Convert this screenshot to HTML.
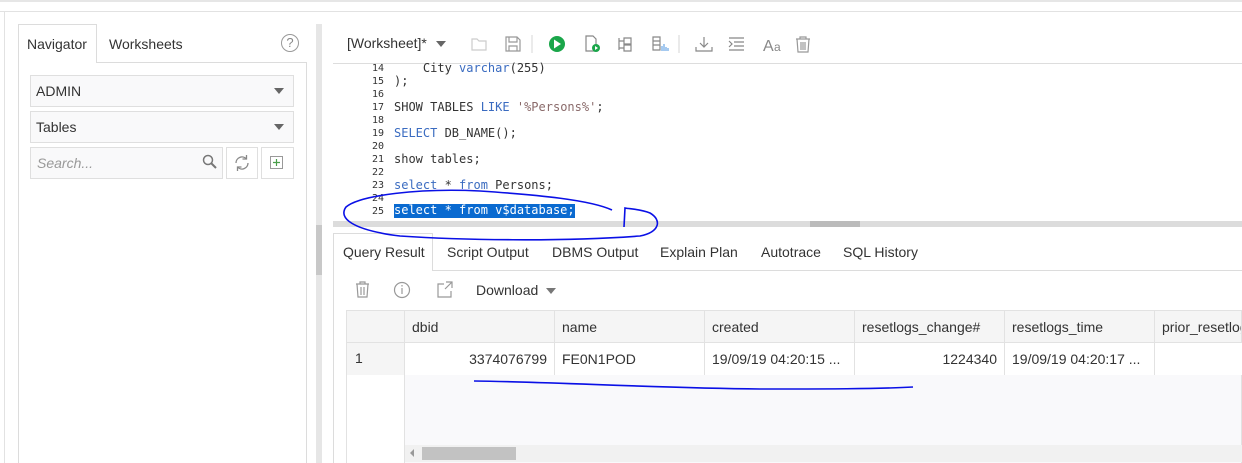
<!DOCTYPE html>
<html><head><meta charset="utf-8"><style>
*{margin:0;padding:0;box-sizing:border-box}
html,body{width:1242px;height:463px;overflow:hidden}
body{background:#fff;font-family:"Liberation Sans",sans-serif;font-size:14px;color:#333;position:relative}
.a{position:absolute}
.sel{border:1px solid #dfdfdf;background:#f9f9fa}
.caret{width:0;height:0;border-left:5px solid transparent;border-right:5px solid transparent;border-top:6px solid #666}
.code{font-family:"DejaVu Sans Mono","Liberation Mono",monospace;font-size:12px;line-height:13px;white-space:pre}
.ln{position:absolute;left:340px;width:44px;text-align:right;color:#333;font-size:10px}
.k{color:#3a6bc0}
.s{color:#8a6a6a}
.cell{position:absolute;height:32px;line-height:32px;font-size:14px;padding:0 7px;border-right:1px solid #e2e2e2;white-space:nowrap;overflow:hidden}
</style></head><body>
<div class="a" style="left:0;top:0;width:1242px;height:2px;background:#e6e6e6"></div>
<div class="a" style="left:0;top:11px;width:1242px;height:1px;background:#e2e2e2"></div>
<div class="a" style="left:4px;top:12px;width:1px;height:451px;background:#e2e2e2"></div>

<div class="a" style="left:18px;top:24px;width:79px;height:39px;border:1px solid #dcdcdc;border-bottom:none;background:#fff;z-index:2"></div>
<div class="a" style="left:18px;top:62px;width:289px;height:401px;border:1px solid #dcdcdc;border-bottom:none"></div>
<div class="a" style="left:27px;top:36px;z-index:3">Navigator</div>
<div class="a" style="left:109px;top:36px">Worksheets</div>
<div class="a" style="left:281px;top:34px;width:18px;height:18px;border:1px solid #999;border-radius:50%;text-align:center;font-size:13px;line-height:16px;color:#888">?</div>
<div class="a sel" style="left:30px;top:75px;width:264px;height:32px"></div>
<div class="a" style="left:36px;top:83px">ADMIN</div>
<div class="a caret" style="left:274px;top:88px"></div>
<div class="a sel" style="left:30px;top:111px;width:264px;height:32px"></div>
<div class="a" style="left:36px;top:119px">Tables</div>
<div class="a caret" style="left:274px;top:124px"></div>
<div class="a sel" style="left:30px;top:147px;width:193px;height:32px"></div>
<div class="a" style="left:37px;top:155px;color:#999;font-style:italic">Search...</div>
<svg class="a" style="left:202px;top:154px" width="16" height="16"><circle cx="6" cy="6" r="4.5" fill="none" stroke="#777" stroke-width="1.5"/><path d="M9 9l5 5" stroke="#777" stroke-width="2"/></svg>
<div class="a sel" style="left:226px;top:147px;width:32px;height:32px;background:#fff"></div>
<svg class="a" style="left:233px;top:154px" width="18" height="18"><path d="M3 9a6 6 0 0 1 10.5-4M15 9a6 6 0 0 1-10.5 4" fill="none" stroke="#888" stroke-width="1.3"/><path d="M13.5 1v4h-4M4.5 17v-4h4" fill="none" stroke="#888" stroke-width="1.3"/></svg>
<div class="a sel" style="left:261px;top:147px;width:33px;height:32px;background:#fff"></div>
<svg class="a" style="left:270px;top:156px" width="14" height="14"><rect x="0.5" y="0.5" width="12" height="12" fill="none" stroke="#999"/><path d="M6.5 3v7M3 6.5h7" stroke="#4a9e4a" stroke-width="1.2"/></svg>

<div class="a" style="left:316px;top:24px;width:6px;height:439px;background:#e6e6e6"></div>
<div class="a" style="left:316px;top:225px;width:6px;height:50px;background:#c8c8c8"></div>

<div class="a" style="left:347px;top:35px">[Worksheet]*</div>
<div class="a caret" style="left:436px;top:41px"></div>
<svg class="a" style="left:470px;top:35px" width="360" height="18" fill="none" stroke-width="1.2">
<path d="M2 4h5l2 2h7v9H2z" stroke="#ccc"/>
<path d="M36 2h11l3 3v11H36z M39 2v5h8V2 M39 16v-5h8v5" stroke="#999"/>
<line x1="62" y1="-6" x2="62" y2="20" stroke="#ddd"/>
<circle cx="87" cy="9" r="8" fill="#1aa64a" stroke="none"/><path d="M84 4.5v9l7-4.5z" fill="#fff" stroke="none"/>
<path d="M116 1h7l3 3v12h-10z" stroke="#888"/><circle cx="126" cy="13" r="4" fill="#1aa64a" stroke="none"/><path d="M125 11v4l3-2z" fill="#fff" stroke="none"/>
<path d="M149 3v12M149 6h5M149 13h5 M154 3h7v6h-7z M154 10h7v6h-7z" stroke="#888"/>
<path d="M183 2h7v13h-7z M183 6h7M183 10h7" stroke="#888"/><path d="M192 11v5M194 9v7M196 12v4M198 13v3" stroke="#6aa6e6"/>
<line x1="209" y1="-6" x2="209" y2="20" stroke="#ddd"/>
<path d="M234 2v10M230 8l4 4 4-4M226 12v4h16v-4" stroke="#888"/>
<path d="M259 3h15M264 7h10M264 11h10M259 15h15M259 6l3 3-3 3" stroke="#888"/>
<text x="293" y="16" font-family="Liberation Sans" font-size="16" fill="#888" stroke="none">A</text><text x="304" y="16" font-family="Liberation Sans" font-size="12" fill="#888" stroke="none">a</text>
<path d="M326 4h14M330 4V2h6v2M327 4l1 13h10l1-13M331 7v8M333 7v8M335 7v8" stroke="#999"/>
</svg>
<div class="a" style="left:333px;top:63px;width:909px;height:1px;background:#ddd"></div>

<div class="a code" style="left:0;top:62px;width:1242px;height:158px">
<div class="ln" style="top:0">14</div><div class="a" style="left:394px;top:0">    City <span class="k">varchar</span>(255)</div>
<div class="ln" style="top:13px">15</div><div class="a" style="left:394px;top:13px">);</div>
<div class="ln" style="top:26px">16</div>
<div class="ln" style="top:39px">17</div><div class="a" style="left:394px;top:39px">SHOW TABLES <span class="k">LIKE</span> <span class="s">'%Persons%'</span>;</div>
<div class="ln" style="top:52px">18</div>
<div class="ln" style="top:65px">19</div><div class="a" style="left:394px;top:65px"><span class="k">SELECT</span> DB_NAME();</div>
<div class="ln" style="top:78px">20</div>
<div class="ln" style="top:91px">21</div><div class="a" style="left:394px;top:91px">show tables;</div>
<div class="ln" style="top:104px">22</div>
<div class="ln" style="top:117px">23</div><div class="a" style="left:394px;top:117px"><span class="k">select</span> * <span class="k">from</span> Persons;</div>
<div class="ln" style="top:130px">24</div>
<div class="ln" style="top:143px">25</div><div class="a" style="left:394px;top:142px;background:#0a6ad0;color:#fff;height:14px">select * from v$database;</div>
</div>
<div class="a" style="left:333px;top:221px;width:909px;height:6px;background:#dcdcdc"></div>
<div class="a" style="left:810px;top:221px;width:50px;height:6px;background:#bbb"></div>

<div class="a" style="left:333px;top:233px;width:100px;height:38px;border:1px solid #dcdcdc;border-bottom:none;background:#fff;z-index:2"></div>
<div class="a" style="left:433px;top:270px;width:809px;height:1px;background:#dcdcdc"></div>
<div class="a" style="left:333px;top:270px;width:1px;height:193px;background:#dcdcdc"></div>
<div class="a" style="left:343px;top:244px;z-index:3">Query Result</div>
<div class="a" style="left:447px;top:244px">Script Output</div>
<div class="a" style="left:552px;top:244px">DBMS Output</div>
<div class="a" style="left:660px;top:244px">Explain Plan</div>
<div class="a" style="left:761px;top:244px">Autotrace</div>
<div class="a" style="left:843px;top:244px">SQL History</div>
<svg class="a" style="left:354px;top:281px" width="110" height="18" fill="none" stroke="#999" stroke-width="1.2">
<path d="M2 3h13M6 3V1h5v2M3 3l1 13h9l1-13M7 6v8M10 6v8"/>
<circle cx="48" cy="9" r="7.5"/><path d="M48 7v6M48 4v1.5"/>
<path d="M90 3h-6v13h13v-6M92 1h6v6M98 1l-7 7"/>
</svg>
<div class="a" style="left:476px;top:282px">Download</div>
<div class="a caret" style="left:546px;top:288px;border-top-color:#777"></div>

<div class="a" style="left:346px;top:310px;width:896px;height:153px;border:1px solid #e2e2e2;border-bottom:none;background:#f9f9fb"></div>
<div class="a" style="left:347px;top:311px;width:895px;height:32px;background:#f5f5f5;border-bottom:1px solid #e2e2e2"></div>
<div class="a" style="left:347px;top:343px;width:58px;height:33px;background:#f5f5f5;border-bottom:1px solid #e2e2e2;border-right:1px solid #e2e2e2;padding:7px 8px">1</div>
<div class="a" style="left:347px;top:311px;width:58px;height:32px;border-right:1px solid #e2e2e2"></div>
<div class="a" style="left:405px;top:343px;width:837px;height:32px;background:#fff"></div>
<div class="cell" style="left:405px;top:311px;width:150px">dbid</div>
<div class="cell" style="left:555px;top:311px;width:150px">name</div>
<div class="cell" style="left:705px;top:311px;width:150px">created</div>
<div class="cell" style="left:855px;top:311px;width:150px">resetlogs_change#</div>
<div class="cell" style="left:1005px;top:311px;width:150px">resetlogs_time</div>
<div class="cell" style="left:1155px;top:311px;width:87px">prior_resetlogs</div>
<div class="cell" style="left:405px;top:343px;width:150px;text-align:right">3374076799</div>
<div class="cell" style="left:555px;top:343px;width:150px">FE0N1POD</div>
<div class="cell" style="left:705px;top:343px;width:150px">19/09/19 04:20:15 ...</div>
<div class="cell" style="left:855px;top:343px;width:150px;text-align:right">1224340</div>
<div class="cell" style="left:1005px;top:343px;width:150px">19/09/19 04:20:17 ...</div>
<div class="a" style="left:347px;top:375px;width:58px;height:88px;border-right:1px solid #e2e2e2;background:#fff"></div>
<div class="a" style="left:405px;top:445px;width:837px;height:17px;background:#f1f1f1"></div>
<div class="a" style="left:410px;top:449px;width:0;height:0;border-top:4px solid transparent;border-bottom:4px solid transparent;border-right:4px solid #999"></div>
<div class="a" style="left:422px;top:447px;width:94px;height:13px;background:#c2c2c2"></div>

<svg class="a" style="left:0;top:0;z-index:10" width="1242" height="463" fill="none" stroke="#0a10e6" stroke-width="1.6">
<path d="M612 210C590 200 540 195 480 191C420 188 360 195 346 207C338 218 352 230 400 236C460 240 560 242 640 236C660 232 662 220 650 213C640 209 630 209 625 208L624 227"/>
<path d="M474 381C560 382 650 388 760 389C820 389 880 389 913 387"/>
</svg>
</body></html>
